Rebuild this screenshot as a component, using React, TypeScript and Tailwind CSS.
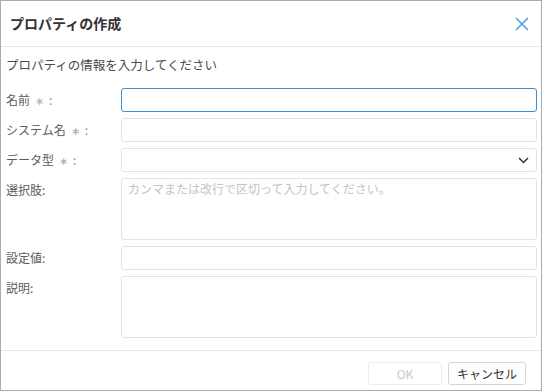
import React from "react";

const font = { fontFamily: '"Noto Sans CJK JP", "Noto Sans", sans-serif' };

function Label({ text, required }: { text: string; required?: boolean }) {
  return (
    <div className="w-[115px] shrink-0 h-[24px] leading-[24px] text-[12px] text-[#5c5c5c]">
      {text}
      {required ? (
        <>
          <span className="ml-[5px] text-[11px] text-[#aaa]">∗</span>
          <span className="ml-[5px] text-[#888]">:</span>
        </>
      ) : (
        ":"
      )}
    </div>
  );
}

function Row({ label, required, children }: { label: string; required?: boolean; children: React.ReactNode }) {
  return (
    <div className="flex items-start">
      <Label text={label} required={required} />
      <div className="flex-1">{children}</div>
    </div>
  );
}

const boxCls = "block w-full rounded-[3px] border border-[#e3e3e3] bg-white text-[12px] text-[#333] outline-none";

export default function App() {
  return (
    <div style={font} className="w-[542px] h-[391px] border border-[#ababab] bg-white flex flex-col">
      <div className="h-[46px] shrink-0 border-b border-[#e6e6e6] flex items-center justify-between pl-[9px] pr-[12px]">
        <div className="text-[14px] font-bold text-[#333]">プロパティの作成</div>
        <svg width="14" height="14" viewBox="0 0 14 14" className="mt-[1px]">
          <path d="M1 1L13 13M13 1L1 13" stroke="#4c9be0" strokeWidth="1.5" fill="none" />
        </svg>
      </div>

      <div className="pl-[5px] pr-[4px] pb-[12px]">
        <div className="mt-[9px] h-[18px] leading-[18px] text-[12.5px] text-[#4a4a4a]">
          プロパティの情報を入力してください
        </div>

        <div className="mt-[14px] flex flex-col gap-[6px]">
          <Row label="名前" required>
            <div className="h-[24px] rounded-[3px] border border-[#3e8fd1] bg-white" />
          </Row>
          <Row label="システム名" required>
            <div className={`${boxCls} h-[24px]`} />
          </Row>
          <Row label="データ型" required>
            <div className={`${boxCls} h-[24px] flex items-center justify-end pr-[7px]`}>
              <svg width="11" height="7" viewBox="0 0 11 7">
                <path d="M1 1L5.5 5.5L10 1" stroke="#333" strokeWidth="1.5" fill="none" />
              </svg>
            </div>
          </Row>
          <Row label="選択肢">
            <div className={`${boxCls} h-[62px] px-[6px] pt-[1px] leading-[18px] text-[#c4c4c4]`}>
              カンマまたは改行で区切って入力してください。
            </div>
          </Row>
          <Row label="設定値">
            <div className={`${boxCls} h-[24px]`} />
          </Row>
          <Row label="説明">
            <div className={`${boxCls} h-[62px]`} />
          </Row>
        </div>
      </div>

      <div className="flex-1 border-t border-[#e6e6e6] flex justify-end items-start pt-[11px] pr-[15px] gap-[6px]">
        <button className="w-[74px] h-[23px] rounded-[3px] border border-[#ececec] bg-white text-[12px] text-[#c8c8c8]">
          OK
        </button>
        <button className="w-[78px] h-[23px] rounded-[3px] border border-[#d6d6d6] bg-white text-[12px] text-[#333]">
          キャンセル
        </button>
      </div>
    </div>
  );
}
